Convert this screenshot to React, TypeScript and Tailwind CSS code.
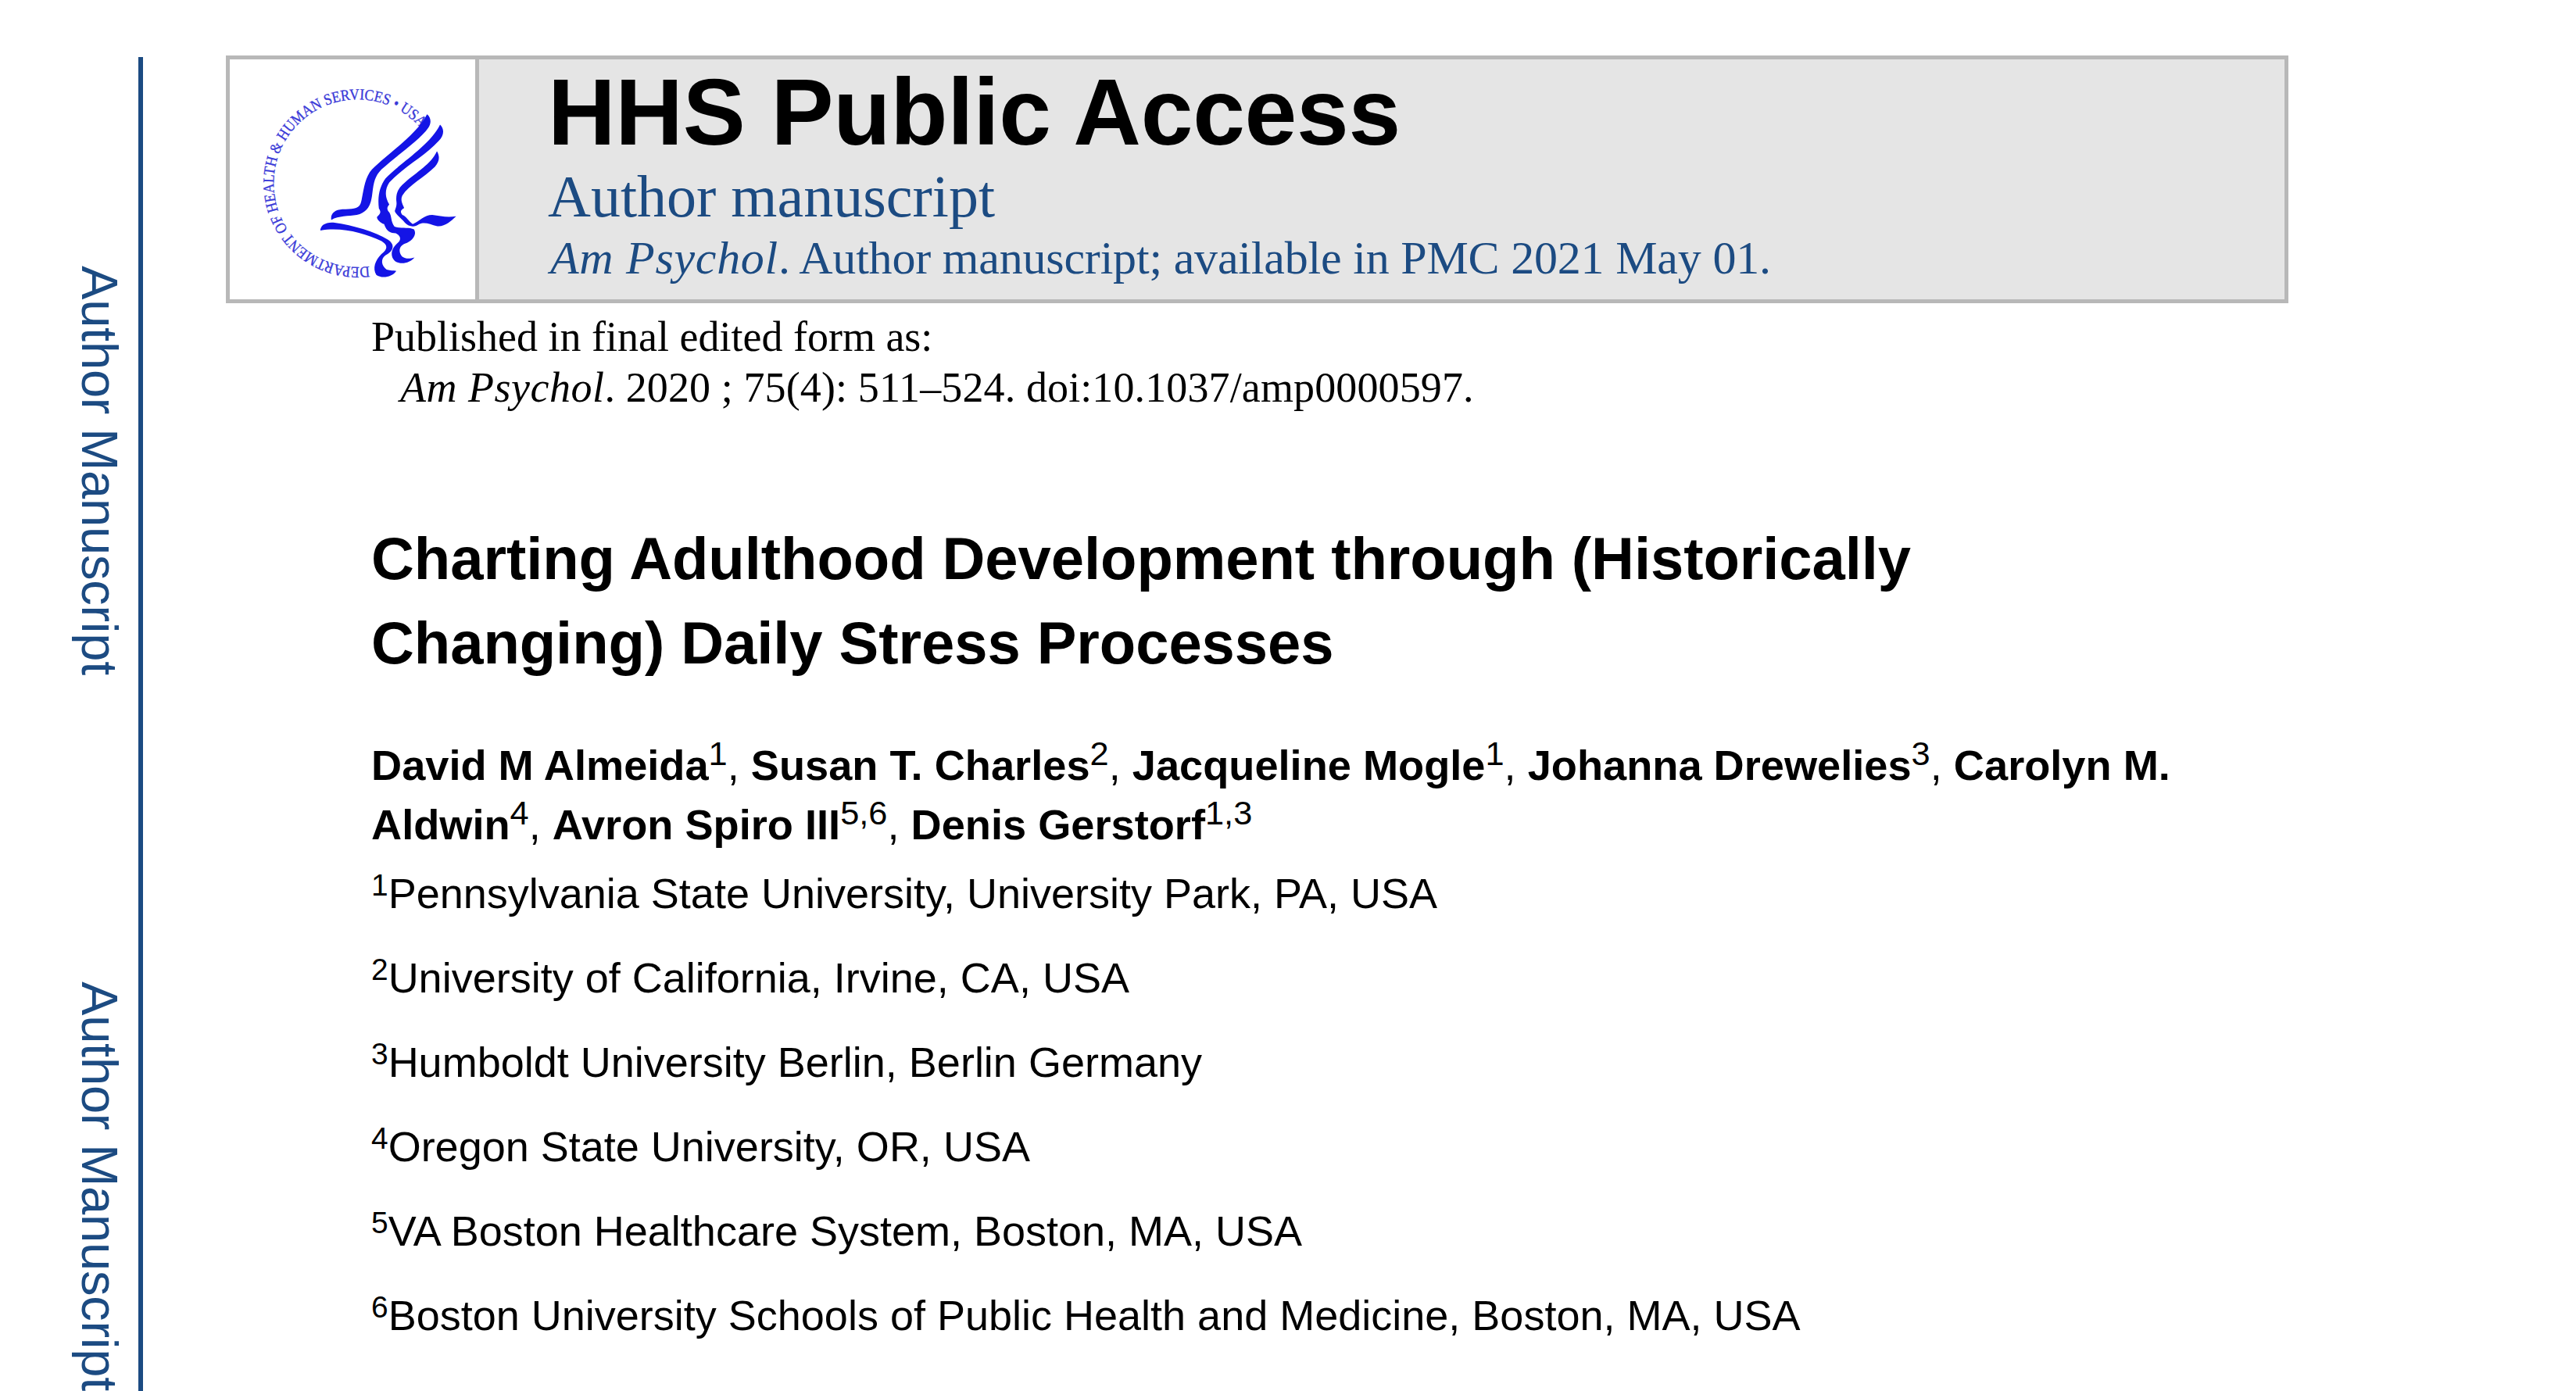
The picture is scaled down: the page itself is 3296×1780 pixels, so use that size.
const affiliations = [
  ["1", "Pennsylvania State University, University Park, PA, USA"],
  ["2", "University of California, Irvine, CA, USA"],
  ["3", "Humboldt University Berlin, Berlin Germany"],
  ["4", "Oregon State University, OR, USA"],
  ["5", "VA Boston Healthcare System, Boston, MA, USA"],
  ["6", "Boston University Schools of Public Health and Medicine, Boston, MA, USA"],
];

function Mark({ children }: { children: string }) {
  return <sup className="font-normal text-[0.8em] top-[-0.45em]">{children}</sup>;
}

function Comma() {
  return <span className="font-normal">, </span>;
}

function HhsLogo() {
  return (
    <svg viewBox="45 48 940 920" className="w-[313px] h-[307px]">
      <defs>
        <path id="seal" d="M578 842 A322 322 0 1 1 770 305" />
      </defs>
      <text fill="#3a3ad8" stroke="#3a3ad8" strokeWidth="1" fontSize="60" fontFamily="Liberation Serif, serif" textLength="1330" lengthAdjust="spacingAndGlyphs">
        <textPath href="#seal" textLength="1330" lengthAdjust="spacingAndGlyphs">DEPARTMENT OF HEALTH &amp; HUMAN SERVICES • USA</textPath>
      </text>
      <g fill="#1414e6">
        <path d="M800 258 C815 270 818 290 805 310 C770 360 690 410 625 470 C600 495 595 520 590 560 C585 610 570 635 530 645 C500 650 460 648 432 664 C428 640 445 625 475 623 C510 620 535 625 545 600 C555 570 555 520 580 480 C620 430 760 340 800 258 Z" />
        <path d="M850 298 C868 315 865 340 845 360 C790 420 710 460 655 520 C635 550 640 580 655 605 C645 615 645 625 655 635 C665 650 660 670 675 690 C700 698 730 690 750 700 C762 720 745 745 715 755 C690 765 690 790 705 805 C720 815 735 812 752 808 C735 830 695 838 675 820 C655 800 665 770 690 750 C700 740 700 725 680 715 C660 715 645 710 635 680 C620 675 605 660 608 652 C620 640 625 635 615 620 C610 580 615 540 640 505 C690 450 810 380 850 298 Z" />
        <path d="M838 400 C850 420 848 440 830 460 C790 500 730 530 705 570 C695 590 710 610 712 618 C700 625 695 630 705 645 C720 650 730 670 745 680 C770 670 790 645 820 645 C850 650 880 655 912 650 C890 670 870 690 840 688 C810 680 790 670 770 680 C750 695 730 690 715 675 C705 660 680 645 676 630 C680 615 685 610 682 590 C680 560 690 540 715 520 C760 480 815 450 838 400 Z" />
        <path d="M390 705 C390 685 410 672 440 674 C520 685 600 710 650 740 C680 760 670 785 640 800 C620 815 625 840 645 855 C660 860 670 858 682 860 C665 885 625 890 605 875 C590 850 600 820 625 795 C650 775 650 760 625 745 C560 715 470 690 390 705 Z" />
      </g>
    </svg>
  );
}

export default function App() {
  return (
    <div className="flex h-[1780px] overflow-hidden bg-white text-black">
      <aside className="w-[183px] shrink-0 mt-[73px] border-r-[6px] border-[#1c4b82] flex flex-col items-end pr-[17px] pt-[267px] gap-[392px] font-['Liberation_Sans',sans-serif] text-[65px] leading-[65px] tracking-[-0.2px] text-[#1c4b82]">
        <div className="[writing-mode:vertical-rl] whitespace-nowrap">Author Manuscript</div>
        <div className="[writing-mode:vertical-rl] whitespace-nowrap">Author Manuscript</div>
      </aside>

      <main className="pl-[106px] pt-[71px]">
        <header className="w-[2639px] h-[317px] flex border-[5px] border-[#b8b8b8] bg-[#e5e5e5]">
          <div className="w-[319px] shrink-0 bg-white border-r-[5px] border-[#b8b8b8] flex items-center justify-center">
            <HhsLogo />
          </div>
          <div className="pl-[88px] pt-[4px] whitespace-nowrap">
            <h1 className="font-['Liberation_Sans',sans-serif] font-bold text-[120px] leading-[126px] tracking-[-0.3px]">HHS Public Access</h1>
            <p className="font-['Liberation_Serif',serif] text-[76px] leading-[90px] text-[#1c4b82]">Author manuscript</p>
            <p className="font-['Liberation_Serif',serif] text-[60px] leading-[68px] tracking-[-0.2px] text-[#1c4b82]"><i className="ml-[3px] tracking-[0.7px]">Am Psychol</i>. Author manuscript; available in PMC 2021 May 01.</p>
          </div>
        </header>

        <div className="pl-[186px] font-['Liberation_Sans',sans-serif]">
          <div className="pt-[11px] font-['Liberation_Serif',serif] text-[54px] leading-[65px]">
            <p>Published in final edited form as:</p>
            <p className="pl-[37px] tracking-[0.12px]"><i className="tracking-[0.5px]">Am Psychol</i>. 2020 ; 75(4): 511–524. doi:10.1037/amp0000597.</p>
          </div>
          <h2 className="mt-[132px] font-bold text-[76px] leading-[108px] tracking-[-0.06px] whitespace-nowrap">
            Charting Adulthood Development through (Historically<br />Changing) Daily Stress Processes
          </h2>
          <p className="mt-[64px] font-bold text-[54.2px] leading-[76px] whitespace-nowrap">
            David M Almeida<Mark>1</Mark><Comma />Susan T. Charles<Mark>2</Mark><Comma />Jacqueline Mogle<Mark>1</Mark><Comma />Johanna Drewelies<Mark>3</Mark><Comma />Carolyn M.<br />
            Aldwin<Mark>4</Mark><Comma />Avron Spiro III<Mark>5,6</Mark><Comma />Denis Gerstorf<Mark>1,3</Mark>
          </p>
          <ul className="-mt-[4px] text-[54px] leading-[108px] whitespace-nowrap">
            {affiliations.map(([mark, name]) => (
              <li key={mark}><sup className="text-[0.72em] top-[-0.42em]">{mark}</sup>{name}</li>
            ))}
          </ul>
        </div>
      </main>
    </div>
  );
}
